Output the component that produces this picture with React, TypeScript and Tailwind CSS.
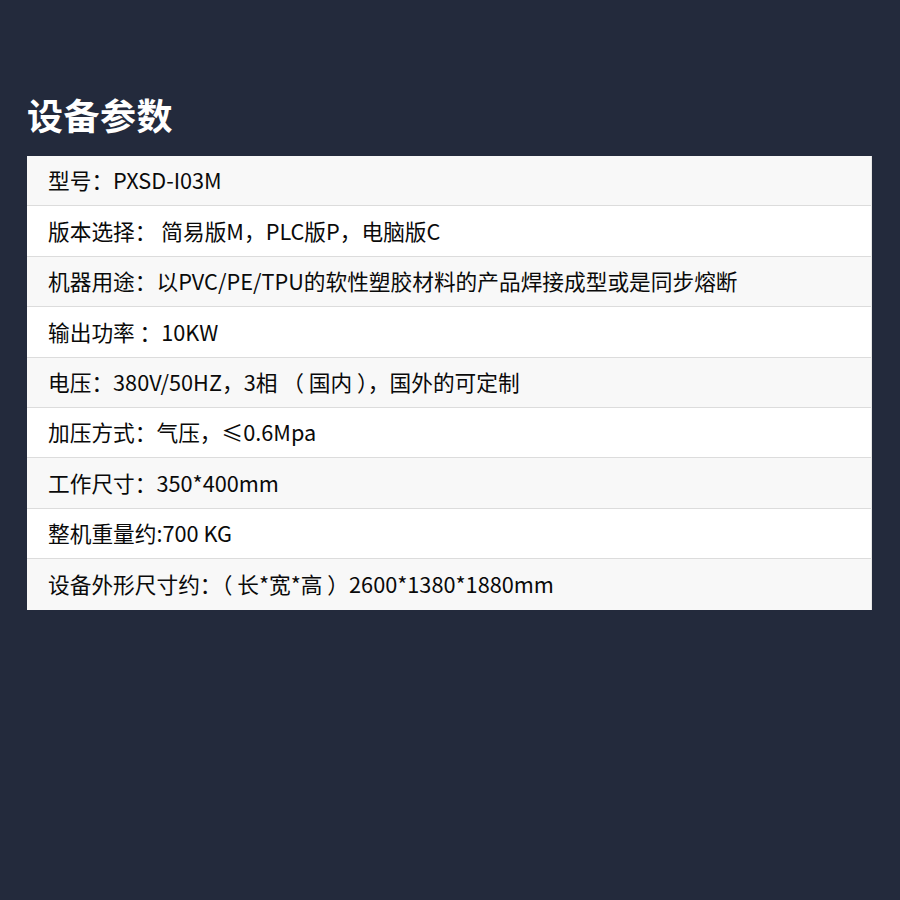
const rows = [
  "型号：PXSD-I03M",
  "版本选择： 简易版M，PLC版P，电脑版C",
  "机器用途：以PVC/PE/TPU的软性塑胶材料的产品焊接成型或是同步熔断",
  "输出功率 ：10KW",
  "电压：380V/50HZ，3相 （ 国内 ），国外的可定制",
  "加压方式：气压，≤0.6Mpa",
  "工作尺寸：350*400mm",
  "整机重量约:700 KG",
  "设备外形尺寸约：（ 长*宽*高 ）2600*1380*1880mm",
];

function App() {
  return (
    <div
      className="w-[900px] h-[900px] bg-[#232a3c] pt-[92px] px-[27px]"
      style={{ fontFamily: '"Noto Sans CJK SC", "Noto Sans", sans-serif' }}
    >
      <h1 className="text-[36px] leading-[44px] font-bold text-white tracking-[0.5px]">
        设备参数
      </h1>
      <div className="mt-[20px] w-[845px] bg-white border-r border-[#e6e6e6]">
        {rows.map((r, i) => (
          <div
            key={i}
            className={
              "h-[50.4px] flex items-center pl-[21px] text-[21.7px] text-[#0a0a0a] border-b border-[#dcdcdc] last:border-b-0 " +
              (i % 2 === 0 ? "bg-[#f8f8f8]" : "bg-white")
            }
          >
            {r}
          </div>
        ))}
      </div>
    </div>
  );
}

export default App;
